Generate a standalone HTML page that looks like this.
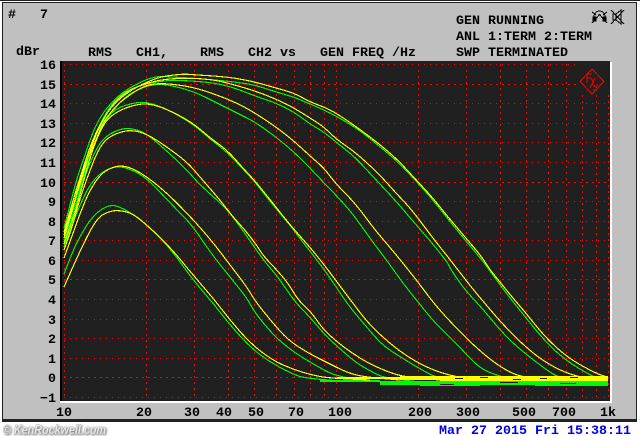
<!DOCTYPE html>
<html><head><meta charset="utf-8"><style>
html,body{margin:0;padding:0;background:#fff;width:640px;height:436px;overflow:hidden}
svg{display:block}
text{font-family:"Liberation Mono",monospace;font-weight:bold;font-size:13.33px;fill:#000}
.y{text-anchor:end}
polyline,.g path,.l path{fill:none;stroke-width:1.15}
.g polyline,.g path{stroke:#00f800}
.l polyline,.l path{stroke:#ffff00}
</style></head><body>
<svg width="640" height="436" viewBox="0 0 640 436" xmlns="http://www.w3.org/2000/svg">
<rect width="640" height="436" fill="#fff"/>
<rect x="0" y="0" width="640" height="1" fill="#222"/>
<rect x="2" y="2" width="635" height="420" fill="#222"/>
<rect x="3" y="3" width="633" height="416" fill="#c0c0c0"/>
<rect x="60" y="61" width="2" height="341" fill="#000"/>
<rect x="62" y="61" width="548" height="340" fill="#202020"/>
<rect x="610" y="62" width="2" height="341" fill="#fff"/>
<rect x="60" y="401" width="552" height="2" fill="#fff"/>

<g stroke="#f00" stroke-width="1" fill="none" shape-rendering="crispEdges">
<g stroke-dasharray="1 5">
<path d="M64 64.5H578M64 103.5H608M64 123.5H608M64 142.5H608M64 162.5H608M64 201.5H608M64 221.5H608M64 240.5H608M64 260.5H608M64 299.5H608M64 319.5H608M64 338.5H608M64 358.5H608M64 397.5H608"/>
</g>
<g stroke-dasharray="2 4">
<path d="M64 84.5H578M64 182.5H608M64 279.5H608M64 377.5H608"/>
</g>
<g stroke-dasharray="2 4">
<path d="M64.5 64V398M146.5 64V398M194.5 64V398M228.5 64V398M254.5 64V398M276.5 64V398M294.5 64V398M310.5 64V398M324.5 64V398M336.5 64V398M418.5 64V398M466.5 64V398M500.5 64V398M526.5 64V398M548.5 64V398M566.5 64V398"/>
<path d="M582.5 95V398M596.5 95V398M608.5 95V398"/>
</g>
</g>

<g class="g" shape-rendering="crispEdges">
<polyline points="64,228 70,205 77,178 84,158 90,140 96,125 103,113 112,102 123,92 135,85 147,79 160,76 172,77 190,78 215,80 235,82 255,85 276,92 294,97 310,104 324,110 336,116 358,129 378,145 398,162 418,183 432,199 448,219 465,240 482,260 490,271 498,282 510,298 523,314 543,339 565,360 590,375 600,379"/>
<polyline points="64,232 70,210 78,185 86,160 94,138 103,118 112,104 122,94 135,87 150,83 170,80 193,81 215,83 235,88 255,96 276,103 294,112 310,124 324,132 336,142 355,157 378,182 395,200 418,227 432,243 448,263 451,270 465,290 482,308 500,330 518,348 548,371 558,377 580,381"/>
<polyline points="64,240 72,213 80,185 88,162 96,140 105,122 115,108 125,97 137,90 150,85 165,84 193,91 217,103 237,113 255,122 276,137 294,152 310,168 324,183 336,195 352,213 362,227 375,245 388,262 402,282 418,302 435,323 455,342 478,367 495,375 520,381"/>
<polyline points="64,242 72,218 80,190 87,165 95,143 103,120 110,114 120,107 130,104 140,102 150,103 167,109 193,124 210,139 227,152 242,168 255,182 272,204 290,225 305,245 317,260 333,282 348,305 365,325 382,345 402,358 422,370 435,377 460,381"/>
<polyline points="64,247 72,225 78,200 85,175 97,147 107,135 123,128 135,129 147,134 167,151 187,170 200,185 225,207 239,225 255,248 265,262 278,277 295,302 308,315 325,335 338,347 355,362 372,372 385,378 420,382"/>
<polyline points="64,247 72,225 80,205 88,188 98,175 110,168 122,166 143,175 160,192 177,210 192,225 210,252 230,277 247,298 255,313 275,337 295,353 315,365 335,376 370,381"/>
<polyline points="64,274 73,250 82,233 90,220 100,210 108,206 115,205 130,212 147,225 170,248 193,280 213,303 230,325 253,350 275,365 295,375 305,378 340,381"/>
<rect x="320" y="380" width="60" height="2" fill="#00f800"/>
<rect x="380" y="381" width="228" height="4" fill="#00f800"/>
<rect x="420" y="385" width="60" height="1" fill="#00f800"/>
<rect x="535" y="385" width="73" height="1" fill="#00f800"/>
</g>
<g class="l" shape-rendering="crispEdges">
<polyline points="64,232 70,212 76,190 80,178 85,162 90,147 98,128 107,113 116,102 127,93 137,87 147,82 160,77 173,75 185,74 197,75 215,76 235,78 255,82 276,88 294,93 310,102 324,107 336,113 358,128 378,143 398,160 418,182 432,197 448,217 465,237 482,257 490,270 500,282 512,297 525,312 545,337 568,358 595,373 607,377"/>
<polyline points="64,235 70,215 78,190 85,168 92,145 100,125 110,108 120,97 130,90 147,83 165,79 193,78 215,80 235,85 255,91 276,99 294,108 310,118 324,127 336,139 355,152 378,173 395,192 412,210 432,237 448,257 458,270 472,288 482,300 505,327 532,353 555,368 575,376 590,378"/>
<polyline points="64,238 72,212 80,180 87,160 93,147 102,125 110,113 118,104 127,97 137,90 147,85 163,83 193,87 217,95 237,103 255,113 276,127 294,141 310,156 324,168 336,184 355,203 375,230 388,245 402,262 418,282 435,305 458,330 482,353 502,368 518,376 540,379"/>
<polyline points="64,244 72,222 80,195 88,165 95,143 103,125 110,117 117,112 130,106 147,103 167,109 193,123 210,138 227,150 242,167 255,181 272,202 290,225 308,245 322,262 337,282 352,302 368,323 388,342 408,357 428,368 448,375 470,379"/>
<polyline points="64,250 72,228 78,205 87,178 98,150 107,138 120,132 132,130 147,134 167,147 187,162 200,177 220,200 233,217 245,230 255,243 265,258 275,268 288,283 298,300 312,313 322,328 337,342 352,353 368,363 388,372 405,377 440,380"/>
<polyline points="64,258 77,222 83,206 90,190 100,175 110,168 123,165 140,172 160,187 177,203 198,225 215,245 230,265 247,287 255,301 272,322 288,340 308,353 328,363 348,373 365,377 400,380"/>
<polyline points="64,287 75,262 83,245 92,227 100,216 108,212 117,210 132,213 147,225 170,247 193,275 213,298 230,320 250,343 272,360 292,369 312,375 328,378 370,380"/>
<rect x="337" y="377" width="63" height="2" fill="#ff0"/>
<rect x="400" y="376" width="40" height="4" fill="#ff0"/>
<rect x="440" y="376" width="168" height="5" fill="#ff0"/>
</g>
<g fill="#202020" shape-rendering="crispEdges">
<rect x="455" y="378" width="8" height="1"/><rect x="480" y="377" width="8" height="1"/><rect x="513" y="379" width="8" height="1"/><rect x="540" y="378" width="7" height="1"/><rect x="570" y="377" width="8" height="1"/><rect x="440" y="384" width="14" height="1"/><rect x="500" y="382" width="18" height="1"/><rect x="560" y="383" width="16" height="1"/>
</g>

<g fill="none" stroke="#f00" stroke-width="1" shape-rendering="crispEdges">
<polygon points="592,69 604,81.5 592,94 580,81.5"/>
<path d="M587 74H592M587 74V83M587 78H591M591 78L594 83M595 78L590 88M592 84L597 88M593 90H597M597 87V84"/>
</g>

<text x="8" y="18">#</text><text x="40" y="18">7</text>
<text x="456" y="24">GEN RUNNING</text>
<text x="456" y="40">ANL 1:TERM 2:TERM</text>
<text x="456" y="56">SWP TERMINATED</text>
<text x="16" y="55">dBr</text>
<text x="88" y="56">RMS</text>
<text x="136" y="56">CH1,</text>
<text x="200" y="56">RMS</text>
<text x="248" y="56">CH2</text>
<text x="280" y="56">vs</text>
<text x="320" y="56">GEN FREQ</text>
<text x="392" y="56">/Hz</text>

<g class="y">
<text class="y" x="56" y="69">16</text><text class="y" x="56" y="89">15</text><text class="y" x="56" y="108">14</text><text class="y" x="56" y="128">13</text><text class="y" x="56" y="147">12</text><text class="y" x="56" y="167">11</text><text class="y" x="56" y="187">10</text><text class="y" x="56" y="206">9</text><text class="y" x="56" y="226">8</text><text class="y" x="56" y="245">7</text><text class="y" x="56" y="265">6</text><text class="y" x="56" y="284">5</text><text class="y" x="56" y="304">4</text><text class="y" x="56" y="324">3</text><text class="y" x="56" y="343">2</text><text class="y" x="56" y="363">1</text><text class="y" x="56" y="382">0</text><text class="y" x="56" y="402">−1</text>
</g>

<text x="56" y="416">10</text><text x="136" y="416">20</text><text x="184" y="416">30</text><text x="216" y="416">40</text><text x="248" y="416">50</text><text x="288" y="416">70</text><text x="328" y="416">100</text><text x="408" y="416">200</text><text x="456" y="416">300</text><text x="512" y="416">500</text><text x="552" y="416">700</text><text x="600" y="416">1k</text>

<g fill="none" stroke="#000" stroke-width="1" shape-rendering="crispEdges">
<path d="M594 17C594 9 605 9 605 17M592 12L596 15M607 12L603 15M592 23L600 14M607 23L599 14"/>
<rect x="593" y="17" width="3" height="4" fill="#000"/>
<rect x="603" y="17" width="3" height="4" fill="#000"/>
<path d="M613 14H616L621 10V24L616 20H613ZM616 14V20M611 10L624 24M624 10L611 24"/>
</g>

<text x="439" y="434" style="fill:#0000e6">Mar 27 2015 Fri 15:38:11</text>
<text x="3" y="434" textLength="103" lengthAdjust="spacingAndGlyphs" style="font-family:'Liberation Sans',sans-serif;font-style:italic;font-size:12.6px;fill:#e8e8e8;stroke:#8a8a8a;stroke-width:.5px;paint-order:stroke;filter:drop-shadow(1px 1px 1px #777)">© KenRockwell.com</text>
</svg>
<script>
document.querySelectorAll('polyline').forEach(function(l){
var p=l.getAttribute('points').trim().split(/\s+/).map(function(s){return s.split(',').map(Number)});
var d='M'+p[0][0]+' '+p[0][1];
for(var i=1;i<p.length-1;i++){
var mx=(p[i][0]+p[i+1][0])/2,my=(p[i][1]+p[i+1][1])/2;
d+='Q'+p[i][0]+' '+p[i][1]+' '+mx+' '+my;
}
d+='L'+p[p.length-1][0]+' '+p[p.length-1][1];
var e=document.createElementNS('http://www.w3.org/2000/svg','path');
e.setAttribute('d',d);
l.parentNode.replaceChild(e,l);
});
</script>
</body></html>
